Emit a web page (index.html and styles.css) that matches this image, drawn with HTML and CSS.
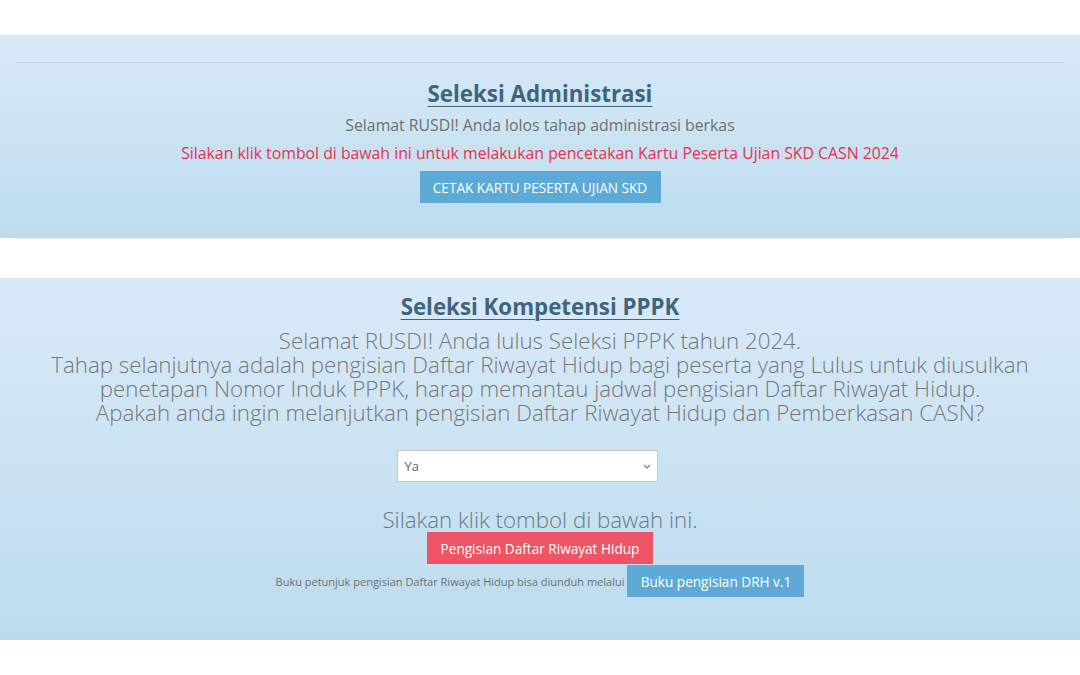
FILE: index.html
```html
<!DOCTYPE html>
<html lang="id">
<head>
    <meta charset="UTF-8">
    <meta name="viewport" content="width=device-width, initial-scale=1.0">
    <title>Seleksi CASN 2024</title>
    <link rel="stylesheet" href="styles.css">
</head>
<body>
    <div class="panel panel-admin">
        <hr class="line">
        <h2 class="title">Seleksi Administrasi</h2>
        <p class="note">Selamat RUSDI! Anda lolos tahap administrasi berkas</p>
        <p class="alert">Silakan klik tombol di bawah ini untuk melakukan pencetakan Kartu Peserta Ujian SKD CASN 2024</p>
        <button class="btn btn-blue btn-upper">Cetak Kartu Peserta Ujian SKD</button>
    </div>

    <div class="gap">
        <hr class="line">
    </div>

    <div class="panel panel-pppk">
        <h2 class="title">Seleksi Kompetensi PPPK</h2>
        <p class="lead">
            Selamat RUSDI! Anda lulus Seleksi PPPK tahun 2024.<br>
            Tahap selanjutnya adalah pengisian Daftar Riwayat Hidup bagi peserta yang Lulus untuk diusulkan<br>
            penetapan Nomor Induk PPPK, harap memantau jadwal pengisian Daftar Riwayat Hidup.<br>
            Apakah anda ingin melanjutkan pengisian Daftar Riwayat Hidup dan Pemberkasan CASN?
        </p>
        <div class="select-box">
            <span>Ya</span>
            <svg width="8" height="5" viewBox="0 0 8 5"><path d="M1 1l3 3 3-3" fill="none" stroke="#888" stroke-width="1.3"/></svg>
        </div>
        <p class="hint">Silakan klik tombol di bawah ini.</p>
        <button class="btn btn-red">Pengisian Daftar Riwayat Hidup</button>
        <div class="guide">
            <span class="guide-text">Buku petunjuk pengisian Daftar Riwayat Hidup bisa diunduh melalui</span>
            <button class="btn btn-blue btn-guide">Buku pengisian DRH v.1</button>
        </div>
    </div>
</body>
</html>
```

FILE: styles.css
```css
body {
    margin: 0;
    padding-top: 35px;
    background: #fff;
    font-family: 'Open Sans', sans-serif;
    color: #666;
}
.panel {
    display: flex;
    flex-direction: column;
    align-items: center;
    text-align: center;
    background: linear-gradient(to bottom, #d9eaf8, #bcdcee);
}
.panel-admin {
    padding: 27px 0 34px;
    height: 142px;
}
.panel-pppk {
    padding: 14px 0 0;
    height: 348px;
}
.line {
    align-self: stretch;
    margin: 0 15px;
    border: none;
    border-top: 1px solid rgba(160, 185, 205, 0.35);
}
.gap {
    height: 40px;
    display: flex;
    align-items: center;
}
.gap .line {
    flex: 1;
    border-top-color: #ececec;
}
.title {
    margin: 16px 0 0;
    font-size: 22.3px;
    line-height: 30px;
    font-weight: 700;
    color: #3e6580;
    text-decoration: underline;
    text-underline-offset: 4px;
    text-decoration-thickness: 1px;
}
.panel-pppk .title {
    margin-top: 0;
}
.note {
    margin: 6px 0 0;
    font-size: 15.8px;
    line-height: 20px;
    color: #6f6f6f;
}
.alert {
    margin: 8px 0 0;
    font-size: 15.8px;
    line-height: 20px;
    color: #e2344d;
}
.btn {
    border: none;
    color: #fff;
    font-family: 'Open Sans', sans-serif;
    cursor: pointer;
    height: 32px;
    padding: 0;
}
.btn-blue { background: #5eaad6; }
.btn-red { background: #ee5465; }
.btn-upper {
    margin-top: 8px;
    width: 241px;
    font-size: 13.6px;
    text-transform: uppercase;
}
.lead {
    margin: 7px 0 0;
    font-size: 22.3px;
    line-height: 24px;
    font-weight: 300;
    color: #777;
}
.select-box {
    margin: 25px 26px 0 0;
    width: 259px;
    height: 30px;
    border: 1px solid #c8c8c8;
    background: #fff;
    display: flex;
    align-items: center;
    justify-content: space-between;
    font-size: 13px;
    color: #666;
}
.select-box span { padding-left: 7px; }
.select-box svg { margin-right: 6px; }
.hint {
    margin: 26px 0 0;
    font-size: 22.3px;
    line-height: 24px;
    font-weight: 300;
    color: #6a7a86;
}
.btn-red {
    width: 226px;
    font-size: 13.6px;
}
.guide {
    display: flex;
    align-items: center;
    gap: 3px;
    margin-top: 1px;
}
.guide-text {
    font-size: 11px;
    color: #6f6f6f;
}
.btn-guide {
    width: 177px;
    font-size: 13.6px;
}
```
